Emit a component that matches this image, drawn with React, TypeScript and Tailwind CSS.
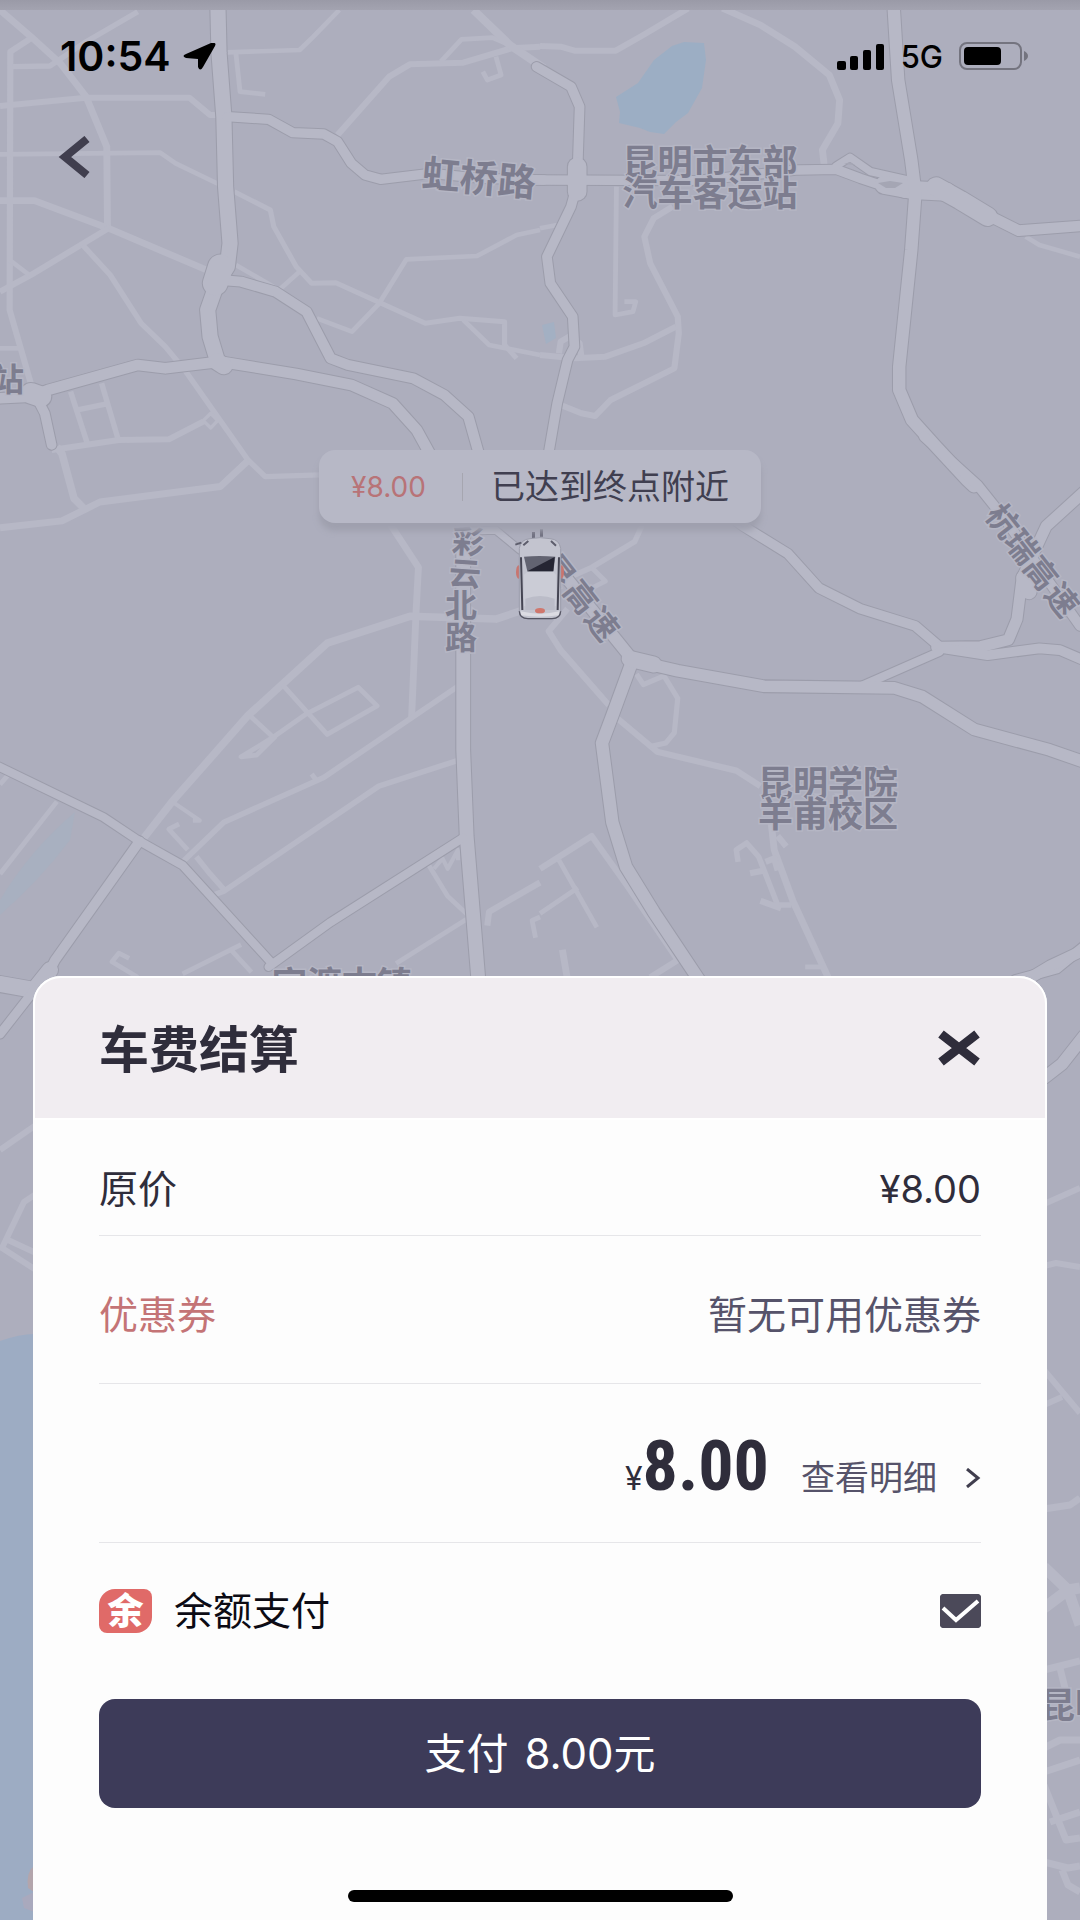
import { useState } from "react";

type Road = [d: string, width: number];
type Tile = { transform: string; minor: Road[]; major: Road[] };

const TILES: Tile[] = [
  {
    transform: "scale(0.3444 0.3333)",
    minor: [
      ["M0 30 L90 110 175 190 250 290 310 440 312 680", 20],
      ["M90 115 L30 155 28 930 95 1170", 18],
      ["M35 200 L145 198 250 125 400 35", 16],
      ["M0 318 L250 293 550 293 610 345 640 345", 18],
      ["M0 463 L465 458 510 490 640 555", 14],
      ["M0 602 L100 602 315 685 600 810", 20],
      ["M315 685 L90 825 0 875", 18],
      ["M28 780 L85 825", 14],
      ["M240 735 L320 825 410 970 480 1040 540 1115 720 1380 770 1430 930 1425", 16],
      ["M660 157 L870 150 910 110 985 30", 14],
      ["M685 160 L697 275 770 283", 14],
      ["M980 405 L1130 230 1190 193 1345 188 1485 145 1568 140", 18],
      ["M1280 185 L1340 118 1430 113 1490 140", 14],
      ["M1375 30 L1480 135 1580 205", 24],
      ["M1440 170 L1455 225 1415 240 1402 215", 14],
      ["M680 575 L785 630 795 680 860 800 905 850 975 848 1235 970 1335 955 1465 965 1465 1035 1500 1075", 15],
      ["M685 795 L810 870 870 815", 14],
      ["M920 955 L1022 995 1100 912 1180 778 1385 768 1500 705 1568 690", 14],
      ["M1345 960 L1420 1035 1568 1065", 14],
      ["M0 1045 L55 1045", 14],
      ["M205 1175 L255 1335 M295 1150 L345 1325 M225 1230 L310 1212", 16],
      ["M150 1350 L345 1320 490 1318 590 1265", 18],
      ["M590 1262 L612 1240 632 1262 612 1284 Z", 10],
      ["M720 1380 L660 1440", 16],
    ],
    major: [
      ["M632 -10 L636 160 650 350 655 560 668 730 660 800 630 850 603 930 610 1010 632 1085", 44],
      ["M660 350 L780 358 850 398 940 402 980 425 1020 490 1060 525 1105 538 1250 520 1400 535 1580 540", 28],
      ["M640 840 L700 845 800 875 890 935 960 1075 1010 1095 1200 1135 1290 1185 1360 1250 1390 1360", 30],
      ["M0 1195 L90 1190 140 1170 400 1095 480 1105 640 1085 860 1122 1020 1155 1140 1210 1210 1290 1250 1365", 32],
      ["M105 1190 L130 1240 150 1335", 28],
      ["M90 1180 L118 1190", 62],
      ["M640 800 L625 850", 72],
      ["M630 1085 L650 1098", 50],
    ],
  },
  {
    transform: "translate(540) scale(0.3444 0.3333)",
    minor: [
      ["M0 138 L60 140 100 152 220 152 300 105 430 25", 18],
      ["M530 25 L640 75 740 140 840 225 870 300 865 370 820 450 825 495", 20],
      ["M0 685 L50 675", 14],
      ["M222 560 L218 945 270 935 278 905 245 905", 14],
      ["M385 620 L330 655 303 710 320 790 400 950 403 1000 390 1105 205 1200 160 1248 120 1240 60 1215", 18],
      ["M395 980 L300 1030 190 1070 100 1075 0 1065", 18],
      ["M1410 710 L1450 735 1568 770", 14],
      ["M55 1060 L60 1025 85 1010 115 1030 120 1070", 18],
    ],
    major: [
      ["M-10 540 L450 542 750 510 860 508 930 535 1060 580", 28],
      ["M860 498 L900 472 960 515 1070 540", 22],
      ["M1000 555 L1080 570 1180 575", 54],
      ["M1180 575 L1270 630 1390 692 1568 678", 32],
      ["M1150 560 L1220 600 1300 650", 56],
      ["M1025 -10 L1040 240 1078 480 1090 580 1078 750 1060 930 1043 1100 1043 1170 1080 1260 1150 1340 1240 1440 1260 1460", 36],
      ["M-10 200 L90 260 115 320 110 480 110 545", 28],
      ["M110 545 L90 620 20 770 30 850 95 950 100 1040 80 1080 50 1210 25 1360", 28],
      ["M108 500 L108 575", 54],
    ],
  },
  {
    transform: "translate(0 440) scale(0.3444)",
    minor: [
      ["M0 255 L180 235 250 200 290 180 640 135 720 60", 20],
      ["M165 20 L180 40 215 170 250 205", 22],
      ["M1130 240 L1215 370 1208 500 1195 810", 20],
      ["M1530 490 L1440 520 1190 512 950 590 720 800 500 1050 410 1165", 22],
      ["M820 710 L950 855 1095 772 1040 718 890 795 790 865 700 920 745 915 800 860", 14],
      ["M725 800 L790 860", 14],
      ["M1330 715 L1190 810 940 980 650 1110 520 1235", 16],
      ["M1330 930 L1100 1005 650 1310 610 1325", 16],
      ["M500 1050 L580 1105 560 1105", 12],
      ["M545 1190 L490 1130 520 1115", 14],
      ["M570 1210 L610 1260 650 1305", 16],
      ["M905 970 L920 990", 14],
      ["M0 1260 L165 1050 M30 965 L0 1000", 14],
      ["M1245 1235 L1300 1325 1365 1385 1150 1520", 14],
      ["M1260 1245 L1285 1215 1300 1245 1330 1190 1330 1220", 12],
      ["M1415 1410 L1420 1370 1568 1285", 18],
      ["M1568 1385 L1545 1395 1555 1445", 14],
      ["M530 1550 L700 1465 M670 1480 L730 1545", 14],
      ["M375 1505 L345 1490 325 1515 400 1560", 14],
    ],
    major: [
      ["M1345 200 L1345 900 1355 1150 1390 1580", 40],
      ["M-10 945 L300 1095 405 1165 530 1235 790 1520", 24],
      ["M405 1165 L160 1510 130 1568", 28],
      ["M780 1530 L960 1400 1345 1155", 24],
      ["M1345 265 L1440 262 1510 320", 20],
    ],
  },
  {
    transform: "translate(540 440) scale(0.3444)",
    minor: [
      ["M300 240 L275 295 150 370 60 410", 16],
      ["M150 370 L190 410 150 430", 14],
      ["M80 490 L25 555 60 610 200 770", 18],
      ["M215 800 L340 905 570 960 640 1005", 18],
      ["M280 680 L300 710 360 685 400 750 390 850 365 880 320 890", 15],
      ["M0 1245 L150 1150 250 1290 400 1510 320 1560", 18],
      ["M55 1220 L165 1415 M0 1375 L110 1300", 14],
      ["M65 1480 L80 1568", 20],
      ["M670 1100 L680 1190 735 1340 840 1568", 20],
      ["M575 1225 L570 1190 600 1170 635 1210 690 1350 730 1350", 16],
      ["M655 1225 L680 1215 690 1250 M610 1258 L650 1250 M640 1338 L700 1360 M690 1150 L715 1180", 18],
      ["M770 1530 L825 1530", 14],
    ],
    major: [
      ["M520 200 L590 250 720 330 810 430 930 490 1090 540 1160 600", 28],
      ["M1160 602 L1280 600 1360 580 1385 520 1400 400 1470 250 1580 150", 32],
      ["M1150 602 L1300 625 1450 605 1510 610 1580 640", 28],
      ["M920 720 L1160 615", 24],
      ["M60 380 L270 640 400 670 650 715 1030 720 1110 745 1260 840 1480 900 1580 935", 34],
      ["M265 650 L210 800 180 880 210 1110 250 1240 330 1370 470 1580", 36],
      ["M260 635 L330 652", 46],
      ["M1115 -10 L1270 130 1350 230 1568 540", 28],
      ["M1405 400 L1420 440", 44],
      ["M1580 1470 L1500 1535 1380 1568", 28],
    ],
  },
  {
    transform: "translate(0 0)",
    minor: [
      ["M0 1150 L36 1125", 6],
      ["M36 1194 L24 1202 2 1248 36 1270 M8 1240 L36 1253", 6],
      ["M1044 1204 L1080 1188 M1044 1266 L1056 1263 1080 1267", 6],
      ["M1044 1370 L1080 1413 M1044 1405 L1062 1397", 6],
      ["M1044 1509 L1070 1505 1080 1498", 7],
      ["M1044 1567 L1068 1590 1080 1588 M1044 1608 L1068 1590 1080 1625", 11],
      ["M1044 1670 L1080 1661 M1060 1668 L1068 1700 M1044 1748 L1060 1740 1080 1740", 7],
      ["M1044 1772 L1080 1760 M1044 1785 L1066 1840 1080 1838 M1050 1822 L1080 1812", 7],
      ["M1044 1862 L1068 1868 1080 1866 M1062 1870 L1068 1885 1080 1892", 7],
    ],
    major: [
      ["M0 984 L34 990 50 970", 16],
      ["M36 988 L0 1034", 9],
      ["M1044 1078 L1062 1064 1084 1036", 12],
      ["M1020 984 L1050 966 1084 950", 11],
    ],
  },
];

function Roads({ kind, color, grow }: { kind: "minor" | "major"; color: string; grow: number }) {
  return (
    <g fill="none" stroke={color} strokeLinejoin="round" strokeLinecap={kind === "major" ? "round" : "butt"}>
      {TILES.map((tile, i) => (
        <g key={i} transform={tile.transform}>
          {tile[kind].map(([d, width], j) => (
            <path key={j} d={d} strokeWidth={width + (i < 4 ? grow * 3 : grow)} />
          ))}
        </g>
      ))}
    </g>
  );
}

type Label = { text: string; x: number; y: number; rotate?: number; size?: number };

const LABELS: Label[] = [
  { text: "虹桥路", x: 479, y: 178, rotate: 5, size: 38 },
  { text: "昆明市东部", x: 710, y: 162, size: 35 },
  { text: "汽车客运站", x: 710, y: 193, size: 35 },
  { text: "站", x: 8, y: 379 },
  { text: "彩", x: 468, y: 542, rotate: 4 },
  { text: "云", x: 465, y: 574, rotate: 4 },
  { text: "北", x: 461, y: 605 },
  { text: "路", x: 461, y: 637 },
  { text: "昆", x: 558, y: 571, rotate: 52 },
  { text: "高", x: 581, y: 597, rotate: 52 },
  { text: "速", x: 602, y: 624, rotate: 52 },
  { text: "杭", x: 1003, y: 521, rotate: 52 },
  { text: "瑞", x: 1022, y: 547, rotate: 52 },
  { text: "高", x: 1041, y: 573, rotate: 52 },
  { text: "速", x: 1062, y: 600, rotate: 52 },
  { text: "昆明学院", x: 828, y: 783, size: 35 },
  { text: "羊甫校区", x: 828, y: 814, size: 35 },
  { text: "官渡古镇", x: 342, y: 984, size: 35 },
  { text: "昆明", x: 1075, y: 1705, size: 35 },
];

function Car() {
  return (
    <g transform="translate(480 500) scale(0.3333)">
      <ellipse cx="116" cy="216" rx="8" ry="20" fill="#c9756f" />
      <ellipse cx="244" cy="216" rx="8" ry="20" fill="#c9756f" />
      <path d="M156 96 h9 v18 h-9 Z M180 88 h9 v22 h-9 Z" fill="#6f6f7f" />
      <path
        d="M118 145 Q122 118 150 116 Q180 110 210 116 Q238 118 242 145 V334 Q241 356 216 356 H144 Q119 356 118 334 Z"
        fill="#c3c4cf"
        stroke="#9d9eac"
        strokeWidth="3"
      />
      <path d="M118 334 Q119 356 144 356 H216 Q241 356 242 334" fill="none" stroke="#565664" strokeWidth="4" />
      <path d="M106 134 L124 128 M130 136 L145 123 M213 123 L228 137" stroke="#5d5d6c" strokeWidth="6" />
      <path d="M132 170 Q178 166 226 170 L220 214 H142 Z" fill="#626371" />
      <path d="M142 214 L224 171 220 214 Z" fill="#252533" />
      <path d="M132 224 L142 216 H220 L228 224 V318 Q180 330 132 318 Z" fill="#cbccd6" />
      <path d="M136 296 Q180 280 224 296 V330 H136 Z" fill="#bbbcc8" />
      <path d="M123 172 L127 330 M237 172 L233 330" stroke="#454553" strokeWidth="6" />
      <path d="M122 334 Q180 348 238 334 L236 346 Q180 354 124 346 Z" fill="#dcdce3" />
      <ellipse cx="180" cy="332" rx="15" ry="8" fill="#d0776d" />
    </g>
  );
}

function CityMap() {
  return (
    <svg
      className="absolute inset-0 h-full w-full"
      viewBox="0 0 1080 1920"
      preserveAspectRatio="xMidYMin slice"
      aria-hidden="true"
    >
      <defs>
        <linearGradient id="topShade" x1="0" y1="0" x2="0" y2="1">
          <stop offset="0" stopColor="#9a9aa7" />
          <stop offset="1" stopColor="#a3a3b0" />
        </linearGradient>
      </defs>
      <rect width="1080" height="1920" fill="#adaebd" />
      <path
        d="M672 46 L684 42 704 43 706 60 702 88 688 113 676 122 664 134 650 132 640 128 619 123 620 112 616 97 638 83 654 60 Z"
        fill="#9caec4"
      />
      <path d="M542 325 L554 322 556 338 546 344 Z" fill="#a3b0c3" />
      <path d="M0 900 Q30 850 75 812 L70 840 Q40 880 0 915 Z" fill="#a8b0c0" />
      <path d="M0 1341 Q20 1334 34 1334 V1920 H0 Z" fill="#9dacc3" />
      <path d="M34 1866 Q26 1872 28 1888 L34 1892 Z" fill="#b3a5ac" />
      <path d="M34 1892 L22 1898 24 1908 34 1912 Z" fill="#a9a9bd" />
      <Roads kind="minor" color="#b7b8c6" grow={0} />
      <Roads kind="major" color="#9c9dab" grow={2} />
      <Roads kind="major" color="#b7b8c6" grow={0} />
      <path d="M844 164 l6 -2 5 3 z M878 183 l12 -2 13 2 -8 5 -9 0 z" fill="#a5a6b4" />
      <rect width="1080" height="10" fill="url(#topShade)" />
      <g
        fill="#7d7d8f"
        stroke="#b5b6c4"
        strokeWidth="3"
        paintOrder="stroke"
        fontWeight="700"
        textAnchor="middle"
        dominantBaseline="central"
      >
        {LABELS.map(({ text, x, y, rotate = 0, size = 32 }) => (
          <text key={`${text}${x}`} x={x} y={y} fontSize={size} transform={`rotate(${rotate} ${x} ${y})`}>
            {text}
          </text>
        ))}
      </g>
      <Car />
    </svg>
  );
}

function StatusBar() {
  return (
    <div className="flex h-[112px] items-center justify-between pr-[51px] pl-[60px] text-black">
      <div className="flex items-center gap-3">
        <span className="text-[41px] leading-none font-semibold">10:54</span>
        <svg className="h-[27px] w-[33px]" viewBox="0 0 33 27" aria-label="定位">
          <path d="M32 3 L20 24 Q17 29 15 24 L15 16 3 15 Q-2 13 3 11 L28 0 Q34 -1 32 3 Z" />
        </svg>
      </div>
      <div className="flex items-center gap-4">
        <svg className="h-[27px] w-[48px]" viewBox="0 0 48 27" aria-label="信号">
          <rect x="0" y="18" width="9" height="9" rx="2" />
          <rect x="13" y="13" width="8" height="14" rx="2" />
          <rect x="26" y="7" width="8" height="20" rx="2" />
          <rect x="39" y="1" width="8" height="26" rx="2" />
        </svg>
        <span className="text-[31px] leading-none font-medium">5G</span>
        <svg className="h-[28px] w-[70px]" viewBox="0 0 70 28" aria-label="电量">
          <rect x="1" y="1" width="61" height="26" rx="7" fill="none" stroke="#74747f" strokeWidth="2" />
          <rect x="5" y="5" width="37" height="18" rx="4" />
          <path d="M65 9 Q69 11 69 14 Q69 17 65 19 Z" fill="#74747f" />
        </svg>
      </div>
    </div>
  );
}

export default function App() {
  const [useBalance, setUseBalance] = useState(true);

  return (
    <main className="relative flex min-h-screen flex-col overflow-hidden bg-[#adaebd] font-['Inter','Noto_Sans_CJK_SC',sans-serif] text-[#2f2d3b]">
      <CityMap />

      <div className="relative flex flex-1 flex-col">
        <StatusBar />
        <div className="px-[55px] pt-6">
          <button type="button" aria-label="返回" className="block">
            <svg className="h-[42px] w-[40px]" viewBox="0 0 40 42" fill="none" stroke="#403e4e" strokeWidth="8">
              <path d="M32 3 L10 21 L32 39" />
            </svg>
          </button>
        </div>

        <div className="mx-auto mt-[272px] mb-20 flex h-[73px] items-center rounded-2xl bg-[#b7b8c6] px-8 shadow-[0_8px_6px_#9fa0ae]">
          <span className="text-[28px] text-[#b87377]">¥8.00</span>
          <span className="mr-7 ml-9 h-7 w-px bg-[#a6a6b0]" />
          <span className="text-[34px] whitespace-nowrap text-[#403f50]">已达到终点附近</span>
        </div>

        <section className="mx-[33px] mt-auto rounded-t-[28px] bg-[#fdfdfd]">
          <header className="flex h-[144px] items-center justify-between rounded-t-[28px] border-2 border-white bg-[#f1edf1] px-16">
            <h1 className="pt-1 text-[50px] leading-none font-bold">车费结算</h1>
            <button type="button" aria-label="关闭">
              <svg className="h-[36px] w-[44px]" viewBox="0 0 44 36" fill="none" stroke="#2f2d3b" strokeWidth="9">
                <path d="M4 4 L40 32 M40 4 L4 32" />
              </svg>
            </button>
          </header>

          <div className="px-[66px]">
            <div className="flex h-[116px] items-center justify-between border-b border-[#e6e6e9] pt-6 text-[39px]">
              <span>原价</span>
              <span className="text-[38px]">¥8.00</span>
            </div>

            <div className="flex h-[148px] items-center justify-between border-b border-[#e6e6e9] pt-3 text-[39px]">
              <span className="text-[#c47476]">优惠券</span>
              <span className="text-[#56536a]">暂无可用优惠券</span>
            </div>

            <div className="flex h-[159px] items-center justify-end border-b border-[#e6e6e9] pt-2">
              <div className="flex items-baseline">
                <span className="text-[32px]">¥</span>
                <span className="font-['Liberation_Sans_Narrow','Roboto_Condensed',sans-serif] text-[70px] leading-none font-bold">
                  8.00
                </span>
                <button type="button" className="ml-8 flex items-center gap-7 text-[34px] text-[#56536a]">
                  查看明细
                  <svg className="h-[20px] w-[16px]" viewBox="0 0 16 20" fill="none" stroke="#403e4e" strokeWidth="3">
                    <path d="M2 1 L13 10 L2 19" />
                  </svg>
                </button>
              </div>
            </div>

            <div className="flex h-[156px] items-center justify-between pb-5">
              <label htmlFor="balance" className="flex items-center gap-[22px] text-[39px] text-[#0c0b14]">
                <span className="flex h-[44px] w-[53px] items-center justify-center rounded-tl-2xl rounded-tr-lg rounded-br-2xl rounded-bl-lg bg-[#e06a68] text-[36px] leading-none font-black text-white">
                  余
                </span>
                余额支付
              </label>
              <span className="relative flex h-[34px] w-[41px]">
                <input
                  id="balance"
                  type="checkbox"
                  checked={useBalance}
                  onChange={(e) => setUseBalance(e.target.checked)}
                  className="peer h-full w-full appearance-none rounded bg-white ring-2 ring-[#4b4959] ring-inset checked:bg-[#4b4959]"
                />
                <svg
                  className="pointer-events-none absolute inset-0 hidden h-full w-full peer-checked:block"
                  viewBox="0 0 41 34"
                  fill="none"
                  stroke="#fff"
                  strokeWidth="4"
                >
                  <path d="M3 14 L16 26 L38 7" />
                </svg>
              </span>
            </div>

            <button
              type="button"
              className="flex h-[109px] w-full items-center justify-center gap-4 rounded-2xl bg-[#3d3b59] text-[42px] text-white"
            >
              <span>支付</span>
              <span>8.00元</span>
            </button>
          </div>

          <div className="flex justify-center pt-[82px] pb-[18px]">
            <span className="h-3 w-[385px] rounded-full bg-black" />
          </div>
        </section>
      </div>
    </main>
  );
}
